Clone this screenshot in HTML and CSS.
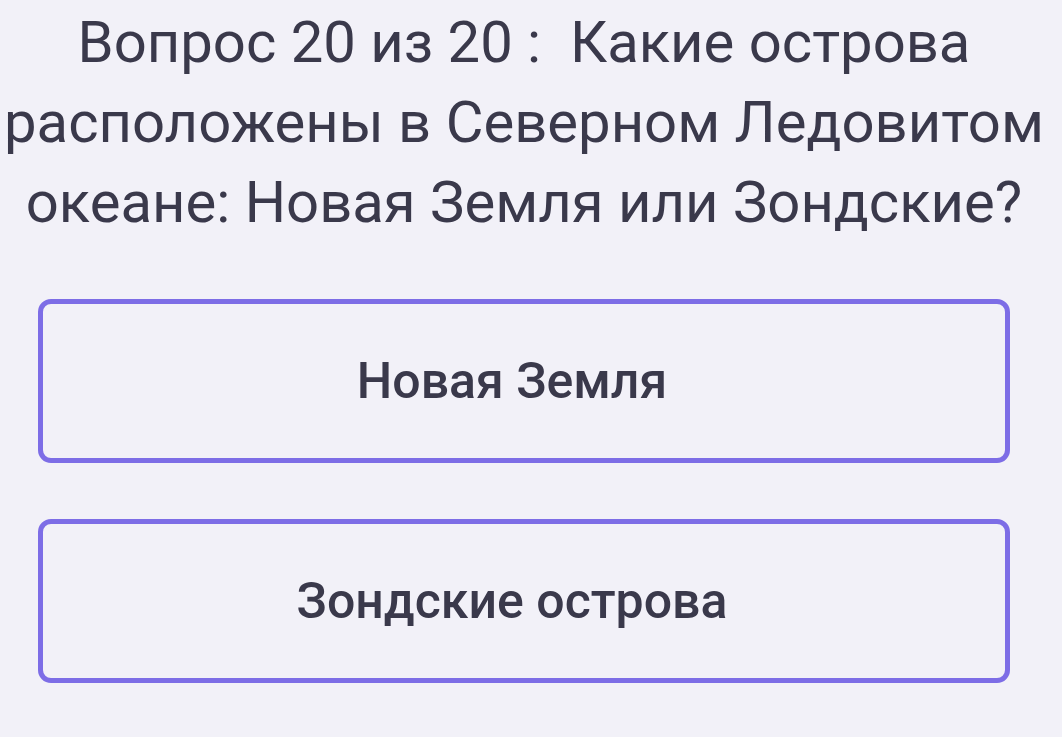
FILE: index.html
```html
<!DOCTYPE html>
<html lang="ru">
<head>
<meta charset="utf-8"/>
<meta content="width=device-width, initial-scale=1.0" name="viewport"/>
<title>Викторина</title>
<link rel="stylesheet" href="styles.css">
</head>
<body>
<div class="quiz">
<h1 class="question">Вопрос 20 из 20 :&nbsp; Какие острова расположены в Северном Ледовитом океане: Новая Земля или Зондские?</h1>
<div class="answers">
<button class="answer" type="button">Новая Земля</button>
<button class="answer" type="button">Зондские острова</button>
</div>
</div>
</body>
</html>
```

FILE: styles.css
```css
body {
    font-family: Roboto, "Noto Sans", sans-serif;
    background: #f2f1f8;
    color: #3a394b;
    margin: 0;
}
.quiz {
    width: 1048px;
    padding-top: 2px;
}
.question {
    margin: 0;
    font-size: 58px;
    font-weight: 400;
    line-height: 80px;
    text-align: center;
}
.answers {
    display: flex;
    flex-direction: column;
    gap: 56px;
    margin: 57px 38px 0;
}
.answer {
    height: 164px;
    display: flex;
    align-items: center;
    justify-content: center;
    padding: 0 24px 0 0;
    background: transparent;
    border: 5px solid #7d6de6;
    border-radius: 13px;
    font-family: inherit;
    font-size: 50px;
    font-weight: 500;
    color: #3a394b;
    cursor: pointer;
}
```
